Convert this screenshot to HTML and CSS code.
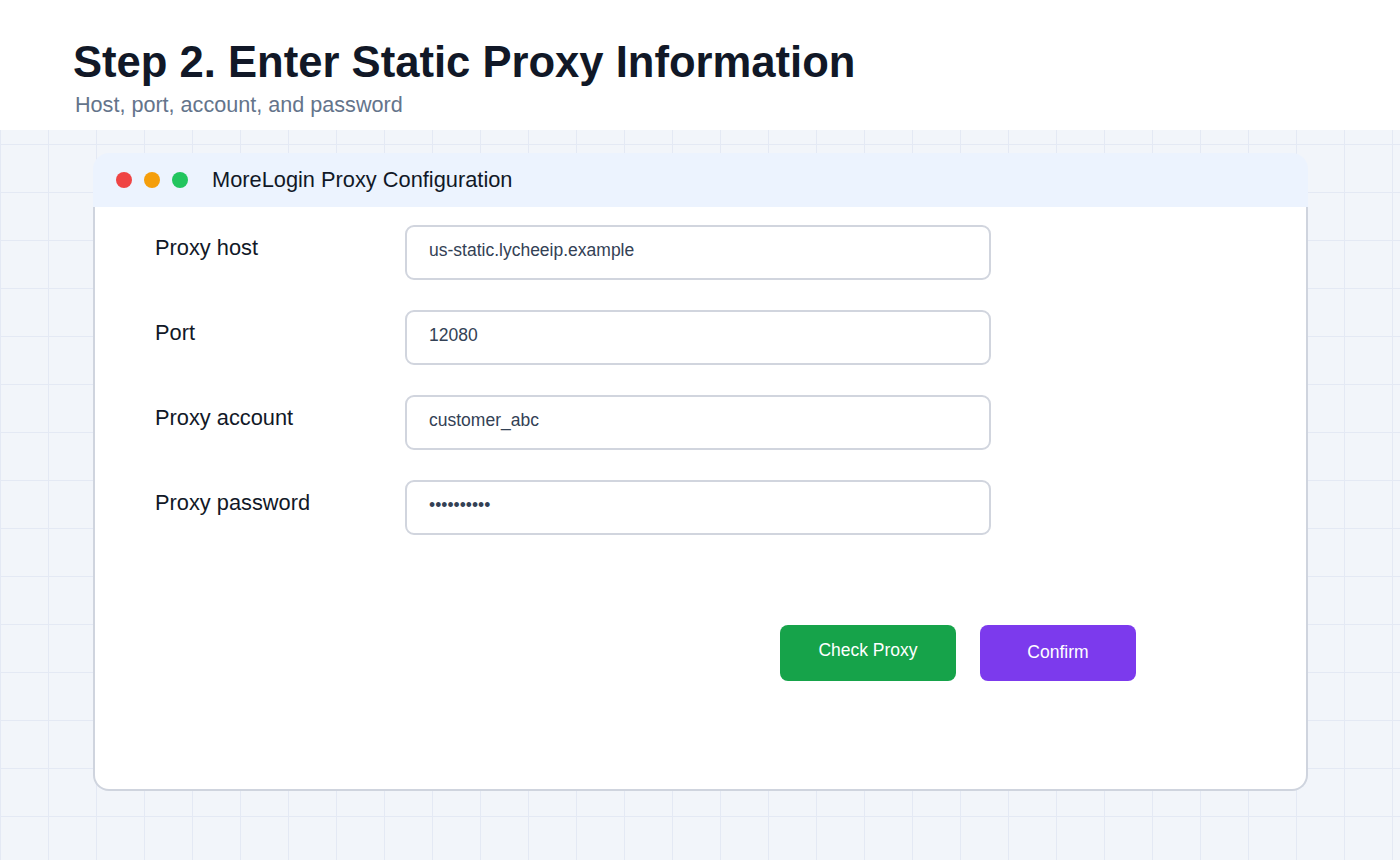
FILE: index.html
```html
<!DOCTYPE html>
<html lang="en">
<head>
    <meta charset="UTF-8">
    <title>Step 2. Enter Static Proxy Information</title>
    <link rel="stylesheet" href="styles.css">
</head>
<body>
<div class="page-head">
    <h1>Step 2. Enter Static Proxy Information</h1>
    <p class="sub">Host, port, account, and password</p>
</div>
<div class="stage">
    <div class="window">
        <div class="titlebar">
            <span class="dot red"></span>
            <span class="dot orange"></span>
            <span class="dot green"></span>
            <span class="title">MoreLogin Proxy Configuration</span>
        </div>
        <div class="win-body">
            <div class="row">
                <div class="label">Proxy host</div>
                <div class="field">us-static.lycheeip.example</div>
            </div>
            <div class="row">
                <div class="label">Port</div>
                <div class="field">12080</div>
            </div>
            <div class="row">
                <div class="label">Proxy account</div>
                <div class="field">customer_abc</div>
            </div>
            <div class="row">
                <div class="label">Proxy password</div>
                <div class="field">&bull;&bull;&bull;&bull;&bull;&bull;&bull;&bull;&bull;&bull;</div>
            </div>
            <div class="actions">
                <div class="btn btn-check">Check Proxy</div>
                <div class="btn btn-confirm">Confirm</div>
            </div>
        </div>
    </div>
</div>
</body>
</html>
```

FILE: styles.css
```css
*{margin: 0; padding: 0; box-sizing: border-box;}
html,body{
    height: 100%;
}
body{
    font-family: "Liberation Sans", Arial, sans-serif;
    color: #111827;
    background-color: #f2f5fa;
    /*48px 网格*/
    background-image:
        linear-gradient(to right, #e4e9f4 1px, transparent 1px),
        linear-gradient(to bottom, #e4e9f4 1px, transparent 1px);
    background-size: 48px 48px;
}
.page-head{
    height: 130px;
    background: #fff;
    padding: 41px 0 0 73px;
}
.page-head h1{
    font-size: 43.6px;
    line-height: 1;
    font-weight: bold;
    color: #111827;
}
.page-head .sub{
    margin-top: 9.5px;
    padding-left: 2px;
    font-size: 21.6px;
    line-height: 1;
    color: #64748b;
}
.stage{
    padding: 23px 0 0 93px;
}
.window{
    width: 1215px;
}
.titlebar{
    height: 54px;
    background: #ecf3fe;
    border-radius: 16px 16px 0 0;
    display: flex;
    align-items: center;
    padding-left: 23px;
}
.dot{
    width: 16px;
    height: 16px;
    border-radius: 50%;
    margin-right: 12px;
}
.red{background: #ef4444;}
.orange{background: #f59e0b;}
.green{background: #22c55e;}
.title{
    margin-left: 12px;
    font-size: 21.8px;
    line-height: 1;
    color: #111827;
}
.win-body{
    background: #fff;
    border: 2px solid #cfd4de;
    border-top: none;
    border-radius: 0 0 16px 16px;
    padding: 18px 0 108px 60px;
}
.row{
    display: flex;
    align-items: flex-start;
    margin-bottom: 30px;
}
.label{
    width: 250px;
    padding-top: 12px;
    font-size: 21.8px;
    line-height: 1;
    color: #111827;
}
.field{
    width: 586px;
    height: 55px;
    border: 2px solid #d1d5de;
    border-radius: 9px;
    padding: 15px 0 0 22px;
    font-size: 17.5px;
    line-height: 1;
    color: #334155;
}
.actions{
    display: flex;
    gap: 24px;
    margin-top: 90px;
    padding-left: 625px;
}
.btn{
    height: 56px;
    border-radius: 8px;
    display: flex;
    align-items: center;
    justify-content: center;
    font-size: 17.5px;
    line-height: 1;
    color: #fff;
}
.btn-check{
    width: 176px;
    background: #16a34a;
    padding-bottom: 4px;
}
.btn-confirm{
    width: 156px;
    background: #7c3aed;
}
```
